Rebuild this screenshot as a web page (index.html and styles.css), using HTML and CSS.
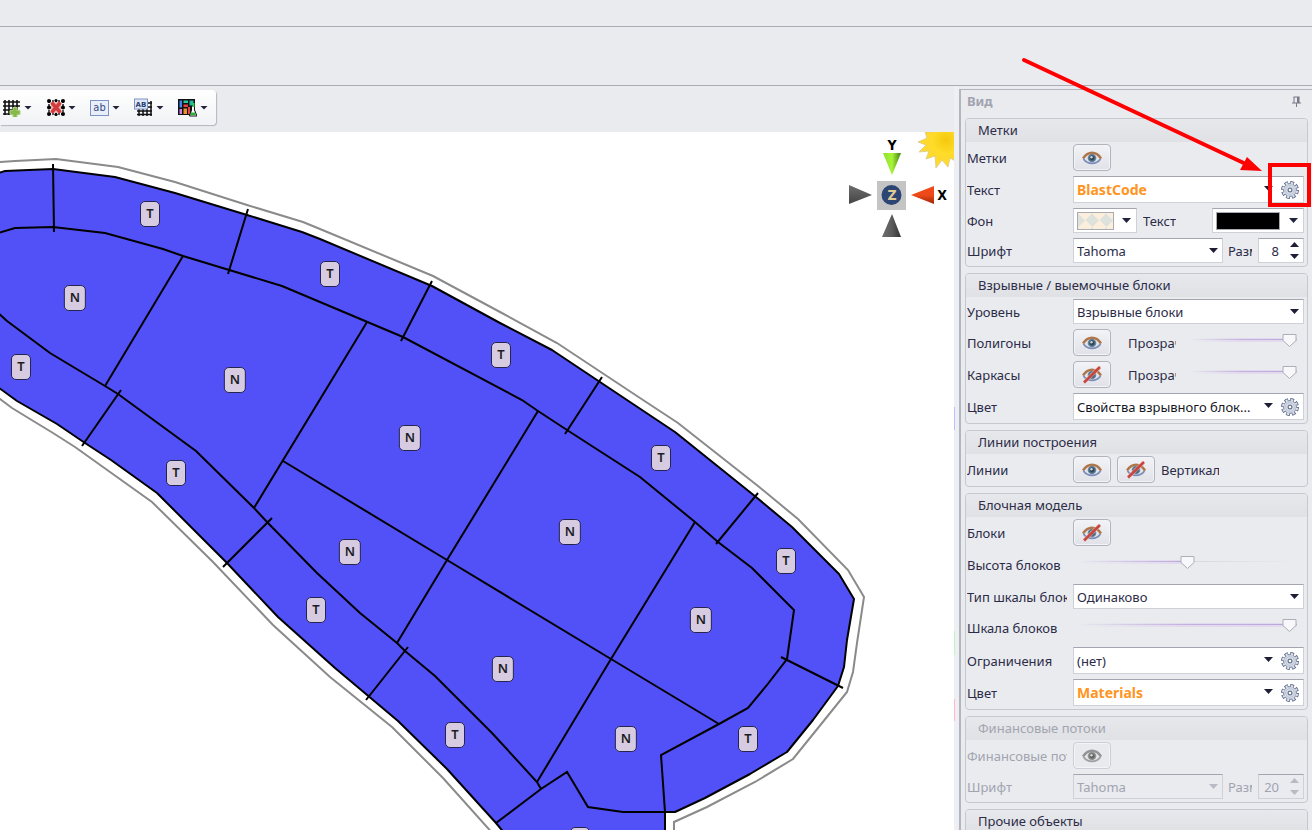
FILE: index.html
```
<!DOCTYPE html>
<html lang="ru">
<head>
<meta charset="utf-8">
<title>Вид</title>
<link rel="stylesheet" href="styles.css">
</head>
<body>
<svg class="defs" aria-hidden="true">
  <defs>
    <radialGradient id="iris"><stop offset="0" stop-color="#16283a"/><stop offset=".4" stop-color="#2d4860"/><stop offset="1" stop-color="#7fa0b5"/></radialGradient>
    <linearGradient id="green"><stop offset="0" stop-color="#8fe02a"/><stop offset=".5" stop-color="#a8f43a"/><stop offset="1" stop-color="#3f8010"/></linearGradient>
    <linearGradient id="red" x2="0" y2="1"><stop offset="0" stop-color="#f0481a"/><stop offset=".5" stop-color="#ee4a18"/><stop offset="1" stop-color="#a02408"/></linearGradient>
    <linearGradient id="gray"><stop offset="0" stop-color="#6e6e6e"/><stop offset=".5" stop-color="#5c5c5c"/><stop offset="1" stop-color="#333"/></linearGradient>
    <linearGradient id="grayH" x2="0" y2="1"><stop offset="0" stop-color="#6e6e6e"/><stop offset="1" stop-color="#444"/></linearGradient>
    <radialGradient id="sun"><stop offset="0" stop-color="#f5c80e"/><stop offset="1" stop-color="#ffde2a"/></radialGradient>
  </defs>
  <symbol id="eye" viewBox="0 0 20 14">
    <path d="M1 7.500C4 3 7 1.800 10 1.800S16.500 3.500 19 7.500C16 11.500 13 12.200 10 12.200S4 11.500 1 7.500Z" fill="#e3e6ec"/>
    <circle cx="10" cy="7" r="4.400" fill="url(#iris)"/>
    <circle cx="9.500" cy="6.300" r="1.200" fill="#fff" opacity=".8"/>
    <path d="M1 7.500C4 3 7 1.800 10 1.800S16.500 3.500 19 7.500" fill="none" stroke="#b0764a" stroke-width="2.400"/>
    <path d="M1.500 8C4 11.500 7 12.300 10 12.300S16 11.500 18.500 8" fill="none" stroke="#7d8cb8" stroke-width="1.800"/>
  </symbol>
  <symbol id="eye-off" viewBox="0 0 20 18">
    <use href="#eye" y="2" width="20" height="14"/>
    <path d="M2 16.500 17.500 1.500" stroke="#e9c7c6" stroke-width="4" opacity=".6"/>
    <path d="M2 16.500 18 1" stroke="#c9453e" stroke-width="2.600"/>
  </symbol>
  <symbol id="gear" viewBox="0 0 18 18">
    <circle cx="9" cy="9" r="7.300" fill="none" stroke="#64708f" stroke-width="3.400" stroke-dasharray="3.700 2.034"/>
    <circle cx="9" cy="9" r="6.400" fill="#dde2ec" stroke="#75819f"/>
    <circle cx="9" cy="9" r="7" fill="none" stroke="#dde2ec" stroke-width="2.200" stroke-dasharray="2.100 3.398" stroke-dashoffset="-.8"/>
    <circle cx="9" cy="9" r="4.300" fill="none" stroke="#bcc4d4" stroke-width="1.200"/>
    <circle cx="9" cy="9" r="1.900" fill="#fff" stroke="#69758f" stroke-width="1.200"/>
  </symbol>
</svg>

<div class="strip strip-top"></div>
<div class="strip strip-ribbon"></div>

<div class="workspace">
  <main class="view">
    <div class="toolbar-row">
      <div class="toolbar">
        <button class="tool" aria-label="Добавить сетку">
          <svg width="19" height="19" viewBox="0 0 19 19"><path d="M3 2v15M7 2v15M11 2v15M15 2v10M1 4h17M1 8h17M1 12h14M1 16h10" stroke="#111" stroke-width="1.600"/><path d="M11 9.500h4v3h3v4h-3v3h-4v-3H8v-4h3Z" fill="#86b84a" stroke="#a9cf7a"/></svg>
          <span class="caret"></span></button>
        <button class="tool" aria-label="Удалить сетку">
          <svg width="19" height="19" viewBox="0 0 19 19"><path d="M3 3h14M3 9.500h14M3 16h14M3 3v13M17 3v13" stroke="#222" stroke-width="1.500" stroke-dasharray="2 1"/><path d="M5 4h10v11H5Z" fill="#e9b0b0"/><path d="m5.500 4.500 9 10m0-10-9 10" stroke="#d23a3c" stroke-width="3.400"/><g fill="#000"><circle cx="3" cy="3" r="2"/><circle cx="10" cy="2.500" r="1.600"/><circle cx="17" cy="3" r="2"/><circle cx="3" cy="9.500" r="2"/><circle cx="17" cy="9.500" r="2"/><circle cx="3" cy="16" r="2"/><circle cx="10" cy="16.500" r="1.600"/><circle cx="17" cy="16" r="2"/></g></svg>
          <span class="caret"></span></button>
        <button class="tool" aria-label="Текст">
          <span class="ab">ab</span>
          <span class="caret"></span></button>
        <button class="tool" aria-label="Подписи сетки">
          <svg width="19" height="19" viewBox="0 0 19 19"><path d="M5 11v7M9 11v7M13 3v15M17 3v15M3 13h15M3 16.500h15M13 5h5M13 9h5" stroke="#111" stroke-width="1.500"/><rect x=".5" y="1" width="13" height="10" fill="#dfe8f8" stroke="#7f93c4"/><text x="7" y="9" class="mini">AB</text></svg>
          <span class="caret"></span></button>
        <button class="tool" aria-label="Материалы">
          <svg width="19" height="19" viewBox="0 0 19 19"><path d="M0 1h17v16H0Z" fill="#111"/><path d="M1.500 2.500H4v7H1.500Z" fill="#3f87f0"/><path d="M5.500 2.500H10v2.500H5.500Z" fill="#25c7a4"/><path d="M11.500 2.500h4v5h-4Z" fill="#21b8a0"/><path d="M5.500 6.500H10V9H5.500Z" fill="#ef3f3f"/><path d="M1.500 11H4v5H1.500Z" fill="#c983e6"/><path d="M5.500 10.500H9V16H5.500Z" fill="#f0902c"/><path d="M10 9h2v7h-2Z" fill="#e6454a"/><path d="M13.500 8h3v4l2.500 6h-7.500l2-6Z" fill="#fff" stroke="#111"/><path d="M13 14.500h4l1 2.500h-6Z" fill="#27b53c"/><path d="M15.500 5v4" stroke="#37d052" stroke-width="2"/></svg>
          <span class="caret"></span></button>
      </div>
    </div>

    <div class="canvas">
      <svg class="plan" width="954" height="698" viewBox="0 132 954 698" aria-hidden="true">
        <path class="rim" d="M0 162 15 161 56 159 118 167 175 182 247 205 303 222 320 229 433 276 500 312 557 343 640 398 678 423 758 486 798 519 848 570 864 597 857 643 853 672 847 692 818 728 793 759 755 782 707 807 674 822V836"/>
        <path class="rim" d="M-4 396 12 408 53 433 75 447 152 502 213 562 273 625 330 677 392 727 443 778 495 836"/>
        <path class="ore" d="M-5 174 5 171 53 169 115 177 175 193 247 215 302 232 320 239 432 286 500 323 552 350 600 382 675 432 756 497 792 527 839 574 854 599 847 640 844 667 838 686 813 720 787 752 750 774 705 798 675 812H665V840H510L496 823 447 769 398 721 360 689 335 668 278 617 227 563 157 493 111 460 85 443 57 424 17 401-5 385Z"/>
        <path class="cut" d="M-5 234 15 228 53 227 105 233 163 249 183 256 282 286 320 302 403 337 522 400 538 411 567 430 640 477 695 522 718 542 752 568 794 610 787 659 767 685 748 708 719 724 661 755 665 812M-5 310 7 321 50 353 105 386 118 394 196 451 254 508 268 523 317 573 360 613 397 643 405 651 435 676 492 733 537 782 541 789M496 823 541 789 567 772 588 807 623 812H666"/>
        <path class="cut" d="M53 164 54 232M248 209 228 274M121 390 82 446M432 281 401 341M602 377 565 434M758 493 716 544M781 657 843 688M272 518 223 567M408 647 366 700M183 256 105 386M367 322 254 508M538 411 447 560 397 643M695 522 611 659 537 782M283 461 447 560 611 659 719 724"/>
      </svg>
      <span class="tag" style="left:150px;top:82px">T</span>
      <span class="tag" style="left:330px;top:142px">T</span>
      <span class="tag" style="left:75px;top:166px">N</span>
      <span class="tag" style="left:21px;top:235px">T</span>
      <span class="tag" style="left:235px;top:248px">N</span>
      <span class="tag" style="left:410px;top:306px">N</span>
      <span class="tag" style="left:501px;top:223px">T</span>
      <span class="tag" style="left:661px;top:326px">T</span>
      <span class="tag" style="left:570px;top:400px">N</span>
      <span class="tag" style="left:786px;top:429px">T</span>
      <span class="tag" style="left:701px;top:488px">N</span>
      <span class="tag" style="left:748px;top:607px">T</span>
      <span class="tag" style="left:626px;top:607px">N</span>
      <span class="tag" style="left:503px;top:537px">N</span>
      <span class="tag" style="left:455px;top:603px">T</span>
      <span class="tag" style="left:176px;top:341px">T</span>
      <span class="tag" style="left:316px;top:478px">T</span>
      <span class="tag" style="left:350px;top:420px">N</span>
      <span class="tag" style="left:580px;top:708px"></span>
      <svg class="compass" width="124" height="112" viewBox="830 132 124 112">
        <path d="m925 132 2 6-9 4 8 3-7 7 10-1-3 8 9-3 1 12 6-8 6 7 2-9 5 3V132Z" fill="#ffd92b" stroke="#d9c98a" stroke-width=".8"/>
        <circle cx="946" cy="140" r="15" fill="url(#sun)"/>
        <path d="M883 153h18l-9 22Z" fill="url(#green)"/>
        <path d="m911 195 23-9v18Z" fill="url(#red)"/>
        <path d="m872 195-23-10v19Z" fill="url(#grayH)"/>
        <path d="m892 214-10 23h19Z" fill="url(#gray)"/>
        <path d="M877 181h29v29h-29Z" fill="#c4c4c4"/>
        <circle cx="891.500" cy="195" r="10" fill="#2c4573"/>
        <text class="axis z" x="892" y="200">Z</text>
        <text class="axis" x="892" y="150">Y</text>
        <text class="axis" x="942" y="200">X</text>
      </svg>
    </div>
  </main>

  <div class="splitter"></div>

  <aside class="panel">
    <header class="panel-title"><h1>Вид</h1>
      <svg width="11" height="11" viewBox="0 0 11 11"><path d="M2.500 1h6M3 1v6M8 1v6M1 7h9M5.500 7v4" stroke="#777985" fill="none"/><path d="M6 1h2v6H6Z" fill="#777985"/></svg>
    </header>

    <section class="group">
      <h2>Метки</h2>
      <div class="rows">
        <div class="row"><span class="name">Метки</span><button class="toggle" aria-label="Метки"><svg width="20" height="14"><use href="#eye"/></svg></button></div>
        <div class="row"><label class="name" for="text">Текст</label><div class="combo hot"><div class="pick"><select id="text"><option>BlastCode</option></select></div><button class="gear" aria-label="Настройка"><svg width="18" height="18"><use href="#gear"/></svg></button></div></div>
        <div class="row low"><span class="name">Фон</span><button class="color" aria-label="Цвет фона"><span class="chip checks"></span><span class="caret"></span></button><span class="sub push">Текст</span><button class="color wide" aria-label="Цвет текста"><span class="chip black"></span><span class="caret"></span></button></div>
        <div class="row low"><label class="name" for="font">Шрифт</label><div class="combo"><div class="pick"><select id="font"><option>Tahoma</option></select></div></div><label class="sub size" for="size">Размер</label><div class="spin"><input id="size" type="number" value="8"><span class="steps"><button class="up" aria-label="Больше"></button><button class="down" aria-label="Меньше"></button></span></div></div>
      </div>
    </section>

    <section class="group">
      <h2>Взрывные / выемочные блоки</h2>
      <div class="rows">
        <div class="row low"><label class="name" for="level">Уровень</label><div class="combo"><div class="pick"><select id="level"><option>Взрывные блоки</option></select></div></div></div>
        <div class="row"><span class="name">Полигоны</span><button class="toggle" aria-label="Полигоны"><svg width="20" height="14"><use href="#eye"/></svg></button><label class="sub opacity" for="op1">Прозрачность</label><input class="slider" id="op1" type="range" value="100"></div>
        <div class="row"><span class="name">Каркасы</span><button class="toggle" aria-label="Каркасы"><svg width="20" height="18"><use href="#eye-off"/></svg></button><label class="sub opacity" for="op2">Прозрачность</label><input class="slider" id="op2" type="range" value="100"></div>
        <div class="row"><label class="name" for="color1">Цвет</label><div class="combo dark"><div class="pick"><select id="color1"><option>Свойства взрывного блок...</option></select></div><button class="gear" aria-label="Настройка"><svg width="18" height="18"><use href="#gear"/></svg></button></div></div>
      </div>
    </section>

    <section class="group">
      <h2>Линии построения</h2>
      <div class="rows">
        <div class="row"><span class="name">Линии</span><button class="toggle" aria-label="Линии"><svg width="20" height="14"><use href="#eye"/></svg></button><button class="toggle" aria-label="Вертикальные"><svg width="20" height="18"><use href="#eye-off"/></svg></button><span class="sub vertical">Вертикальные</span></div>
      </div>
    </section>

    <section class="group">
      <h2>Блочная модель</h2>
      <div class="rows">
        <div class="row"><span class="name">Блоки</span><button class="toggle" aria-label="Блоки"><svg width="20" height="18"><use href="#eye-off"/></svg></button></div>
        <div class="row tall"><label class="name" for="height">Высота блоков</label><input class="slider long half" id="height" type="range" value="50"></div>
        <div class="row low"><label class="name" for="scale">Тип шкалы блоков</label><div class="combo"><div class="pick"><select id="scale"><option>Одинаково</option></select></div></div></div>
        <div class="row tall"><label class="name" for="bscale">Шкала блоков</label><input class="slider long" id="bscale" type="range" value="100"></div>
        <div class="row"><label class="name" for="limit">Ограничения</label><div class="combo"><div class="pick"><select id="limit"><option>(нет)</option></select></div><button class="gear" aria-label="Настройка"><svg width="18" height="18"><use href="#gear"/></svg></button></div></div>
        <div class="row"><label class="name" for="color2">Цвет</label><div class="combo hot"><div class="pick"><select id="color2"><option>Materials</option></select></div><button class="gear" aria-label="Настройка"><svg width="18" height="18"><use href="#gear"/></svg></button></div></div>
      </div>
    </section>

    <section class="group off">
      <h2>Финансовые потоки</h2>
      <div class="rows">
        <div class="row"><span class="name">Финансовые потоки</span><button class="toggle" disabled aria-label="Финансовые потоки"><svg width="20" height="14"><use href="#eye"/></svg></button></div>
        <div class="row low"><label class="name" for="font2">Шрифт</label><div class="combo"><div class="pick"><select id="font2" disabled><option>Tahoma</option></select></div></div><label class="sub size" for="size2">Размер</label><div class="spin"><input id="size2" type="number" value="20" disabled><span class="steps"><button class="up" disabled aria-label="Больше"></button><button class="down" disabled aria-label="Меньше"></button></span></div></div>
      </div>
    </section>

    <section class="group">
      <h2>Прочие объекты</h2>
      <div class="rows"></div>
    </section>
    <svg class="callout" width="300" height="160" viewBox="1012 52 300 160" aria-hidden="true">
      <path d="M1024 60 1248 165" fill="none" stroke="#fe0000" stroke-width="4" stroke-linecap="round"/>
      <path d="M1262 171 1240 170 1247 157Z" fill="#fe0000"/>
      <path d="M1270 165h39v40h-39Z" fill="none" stroke="#fe0000" stroke-width="4"/>
    </svg>
  </aside>
</div>
</body>
</html>
```
FILE: styles.css
```
* { box-sizing: border-box; }
html, body { height: 100%; }
body {
  margin: 0;
  display: flex;
  flex-direction: column;
  overflow: hidden;
  background: #e9ebef;
  color: #2c2c48;
  font: 13px/16px "Noto Sans", "DejaVu Sans", sans-serif;
}
button, input, select { font: inherit; color: inherit; margin: 0; padding: 0; border: 0; background: none; }
h1, h2 { margin: 0; font: inherit; }
.defs { position: absolute; width: 0; height: 0; }

.strip { flex: none; border-bottom: 1px solid #aaabb5; }
.strip-top { height: 27px; }
.strip-ribbon { height: 59px; }

.workspace { flex: 1; min-height: 0; display: flex; }
.view { flex: 1; min-width: 0; display: flex; flex-direction: column; }
.toolbar-row { flex: none; height: 46px; padding-top: 4px; display: flex; align-items: flex-start; }
.toolbar {
  height: 35px;
  display: flex;
  align-items: center;
  gap: 14px;
  padding: 0 8px 0 2px;
  border-radius: 0 4px 4px 0;
  background: linear-gradient(#fff, #f1f2f5);
  box-shadow: 1px 1px 1px #b4b6bf;
}
.tool { width: 30px; display: flex; align-items: center; justify-content: space-between; }
.tool svg { display: block; }
.caret { flex: none; width: 8px; height: 4px; background: #23233c; clip-path: polygon(0 0, 100% 0, 50% 100%); }
.ab { width: 19px; height: 16px; border: 1px solid #7d92c6; background: #e8effb; color: #34497f; font: 11px/13px "DejaVu Sans Condensed", "DejaVu Sans", sans-serif; text-align: center; }
.mini { font: bold 7px "DejaVu Sans", sans-serif; fill: #2b3e70; text-anchor: middle; }

.canvas { position: relative; flex: 1; min-height: 0; overflow: hidden; background: #fff; }
.plan { display: block; }
.rim { fill: none; stroke: #8a8a8a; stroke-width: 2; }
.ore { fill: #5151f7; stroke: #000; stroke-width: 2; stroke-linejoin: round; }
.cut { fill: none; stroke: #000; stroke-width: 2; }
.tag {
  position: absolute;
  transform: translate(-50%, -50%);
  min-width: 20px;
  height: 26px;
  padding: 0 5px;
  border: 1px solid #24244e;
  border-radius: 5px;
  background: #d6cbe0;
  color: #1b1b1f;
  font: 600 13px/22px "Noto Sans", sans-serif;
  text-align: center;
}
.compass { position: absolute; top: 0; right: 0; }
.axis { font: bold 14px "DejaVu Sans Condensed", "DejaVu Sans", sans-serif; fill: #000; text-anchor: middle; }
.axis.z { fill: #e0c994; }

.splitter {
  flex: none;
  width: 5px;
  background:
    linear-gradient(#bcbcff, #bcbcff) 0 321px / 1px 23px no-repeat,
    linear-gradient(#bff5bf, #bff5bf) 0 545px / 1px 24px no-repeat,
    linear-gradient(#ffb9c6, #ffb9c6) 0 613px / 1px 22px no-repeat,
    #edeff3;
}
.panel {
  position: relative;
  flex: none;
  width: 353px;
  padding: 0 4px;
  margin-top: 3px;
  border: solid #b3b5be;
  border-width: 1px 0 0 2px;
  display: flex;
  flex-direction: column;
  gap: 6px;
}
.panel-title { flex: none; height: 22px; display: flex; align-items: center; justify-content: space-between; padding: 0 6px 0 2px; color: #a1a3b0; }
.panel-title h1 { font-weight: bold; }

.group { flex: none; border: 1px solid #c6c8cf; border-radius: 4px; }
.group h2 { height: 23px; padding-left: 12px; line-height: 22px; background: linear-gradient(#e7e8eb, #dfe1e5); border-radius: 3px 3px 0 0; }
.rows { display: flex; flex-direction: column; gap: 5px; padding: 2px 3px 3px 1px; }
.row { height: 27px; display: flex; align-items: center; gap: 6px; }
.row.low { height: 25px; }
.row.tall { height: 28px; }
.name { flex: none; width: 100px; overflow: hidden; white-space: nowrap; }
.sub { overflow: hidden; white-space: nowrap; }
.sub.size { width: 24px; margin-left: -1px; }
.sub.opacity { flex: none; width: 48px; margin-left: 11px; }
.sub.vertical { width: 58px; }
.push { margin-right: auto; }

.toggle {
  flex: none;
  width: 38px;
  height: 27px;
  display: grid;
  place-items: center;
  border: 1px solid #b1b3bd;
  border-radius: 4px;
  background: linear-gradient(#f2f3f6, #e0e2e8);
  box-shadow: inset 0 0 0 1px #f3f4f7;
}
.combo, .color, .spin { height: 100%; border: 1px solid #cfd1d8; border-top-color: #a3a5b0; background: #fff; display: flex; align-items: center; }
.combo { flex: 1; min-width: 0; }
.pick { position: relative; flex: 1; min-width: 0; height: 100%; }
.pick select { width: 100%; height: 100%; padding-left: 3px; appearance: none; outline: 0; opacity: 1; }
.pick::after {
  content: "";
  position: absolute;
  right: 4px;
  top: 9px;
  width: 9px;
  height: 5px;
  background: #1d1d35;
  clip-path: polygon(0 0, 100% 0, 50% 100%);
  pointer-events: none;
}
.hot select { color: #ff9420; font-size: 14px; font-weight: bold; }
.dark select { color: #16161e; }
.gear { flex: none; width: 26px; height: 100%; display: grid; place-items: center; }
.color { flex: none; width: 64px; justify-content: space-between; padding: 0 5px 0 3px; }
.color .caret { width: 9px; height: 5px; }
.color.wide { width: 92px; }
.chip { width: 37px; height: 18px; border: 1px solid #a9abb3; }
.wide .chip { width: 64px; }
.black { background: #000; }
.checks { background: #fbeedd conic-gradient(from 45deg, #dde3dc 25%, #fbeedd 0 50%, #dde3dc 0 75%, #fbeedd 0) 0 0 / 14px 14px; }
.spin { flex: none; width: 46px; justify-content: space-between; padding-right: 4px; }
.spin input { width: 20px; text-align: right; appearance: textfield; outline: 0; }
.spin input::-webkit-inner-spin-button { appearance: none; margin: 0; }
.steps { display: flex; flex-direction: column; gap: 7px; }
.steps button { width: 9px; height: 5px; background: #1d1d35; }
.up { clip-path: polygon(50% 0, 100% 100%, 0 100%); }
.down { clip-path: polygon(0 0, 100% 0, 50% 100%); }

.slider { flex: 1; min-width: 0; height: 20px; margin: 0 7px 4px 9px; appearance: none; }
.slider.long { margin-left: 4px; }
.slider::-webkit-slider-runnable-track {
  height: 16px;
  background: linear-gradient(90deg, #e9ebef00, #c5b1de 50%, #bda6da) 0 6px / 100% 1px no-repeat, linear-gradient(90deg, #e9ebef00, #e1d9ee 50%) 0 5px / 100% 4px no-repeat;
}
.slider.half::-webkit-slider-runnable-track {
  background: linear-gradient(90deg, #e9ebef00, #bda6da 49%, #d6d7de 49%, #e9ebef00) 0 6px / 100% 1px no-repeat, linear-gradient(90deg, #e9ebef00, #e1d9ee 49%, #e9ebef00 49%) 0 5px / 100% 4px no-repeat;
}
.slider::-webkit-slider-thumb {
  appearance: none;
  width: 15px;
  height: 15px;
  background: url("data:image/svg+xml,%3Csvg xmlns='http://www.w3.org/2000/svg' width='15' height='15'%3E%3Cpath d='M1 1.500h13v6l-6.500 6-6.500-6z' fill='%23f8f8fa' stroke='%23acaeb8'/%3E%3C/svg%3E");
}

.off { color: #a2a4b0; }
.off select, .off input { color: #a2a4b0; opacity: 1; }
.off .combo, .off .spin { background: #e9ebef; }
.off .toggle { background: #e8eaee; border-color: #cdcfd6; }
.off .toggle svg { filter: grayscale(1); opacity: .8; }
.off .pick::after, .off .steps button { background: #b9bbc4; }

.callout { position: absolute; right: 0; top: -38px; pointer-events: none; }
```
